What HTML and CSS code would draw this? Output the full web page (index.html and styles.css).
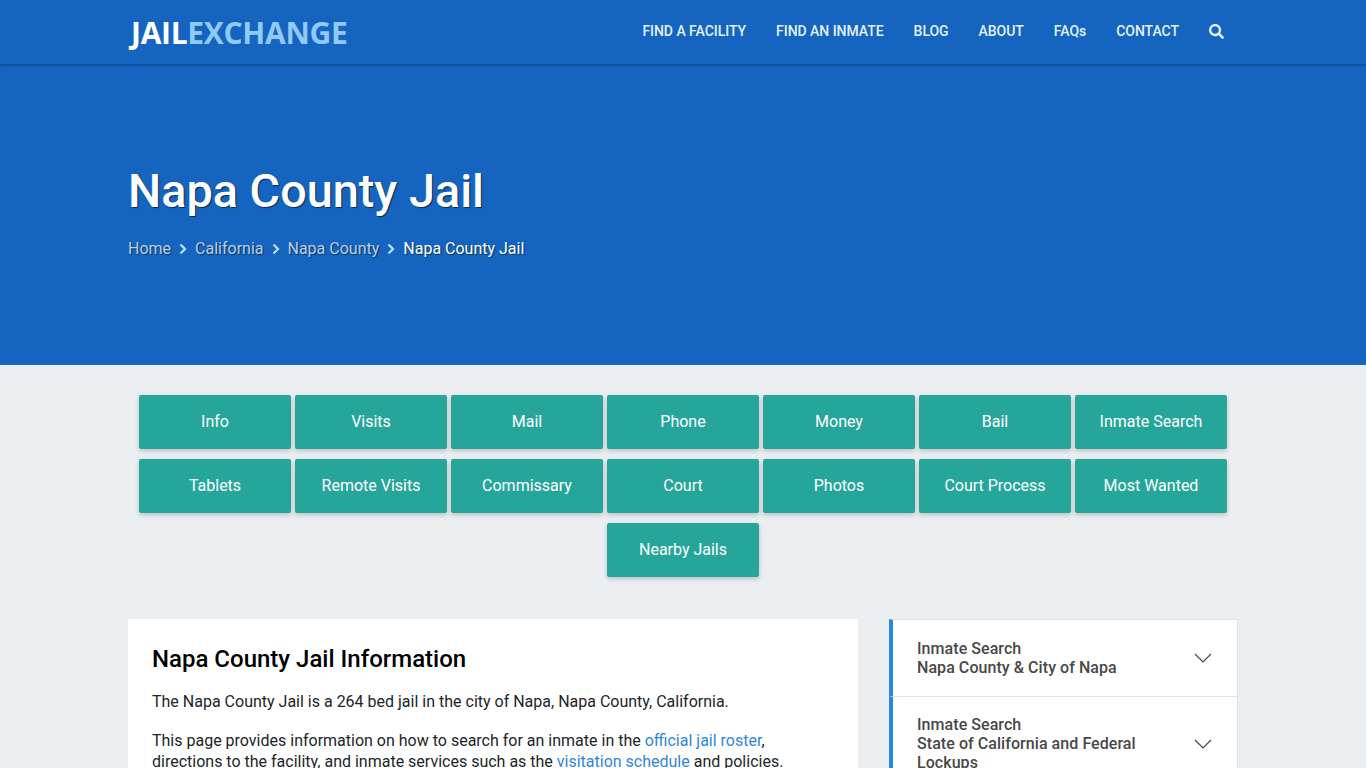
FILE: index.html
```html
<!DOCTYPE html>
<html lang="en">
<head>
    <meta charset="UTF-8">
    <meta name="viewport" content="width=device-width, initial-scale=1.0">
    <title>Napa County Jail</title>
    <link rel="stylesheet" href="styles.css">
</head>
<body>
    <header class="topbar">
        <div class="wrap topbar-inner">
            <a class="logo" href="#">JAIL<span>EXCHANGE</span></a>
            <nav class="main-nav">
                <a href="#">FIND A FACILITY</a>
                <a href="#">FIND AN INMATE</a>
                <a href="#">BLOG</a>
                <a href="#">ABOUT</a>
                <a href="#">FAQs</a>
                <a href="#">CONTACT</a>
                <a href="#" class="search-link" aria-label="Search">
                    <svg viewBox="0 0 512 512" width="15" height="15"><path fill="currentColor" d="M505 442.700L405.300 343c-4.500-4.500-10.600-7-17-7H372c27.600-35.300 44-79.700 44-128C416 93.100 322.900 0 208 0S0 93.100 0 208s93.100 208 208 208c48.300 0 92.700-16.400 128-44v16.300c0 6.400 2.500 12.500 7 17l99.700 99.700c9.400 9.400 24.600 9.400 33.900 0l28.300-28.300c9.400-9.400 9.400-24.600.1-34zM208 336c-70.700 0-128-57.200-128-128 0-70.700 57.200-128 128-128 70.700 0 128 57.200 128 128 0 70.700-57.200 128-128 128z"/></svg>
                </a>
            </nav>
        </div>
    </header>

    <section class="hero">
        <div class="wrap">
            <h1>Napa County Jail</h1>
            <div class="breadcrumb">
                <a href="#">Home</a>
                <svg class="crumb-sep" viewBox="0 0 8 12" width="8" height="12"><path d="M1.500 1.500L6 6l-4.500 4.500" fill="none" stroke="currentColor" stroke-width="2.200"/></svg>
                <a href="#">California</a>
                <svg class="crumb-sep" viewBox="0 0 8 12" width="8" height="12"><path d="M1.500 1.500L6 6l-4.500 4.500" fill="none" stroke="currentColor" stroke-width="2.200"/></svg>
                <a href="#">Napa County</a>
                <svg class="crumb-sep" viewBox="0 0 8 12" width="8" height="12"><path d="M1.500 1.500L6 6l-4.500 4.500" fill="none" stroke="currentColor" stroke-width="2.200"/></svg>
                <span class="current">Napa County Jail</span>
            </div>
        </div>
    </section>

    <main class="content">
        <div class="button-grid">
            <a href="#">Info</a>
            <a href="#">Visits</a>
            <a href="#">Mail</a>
            <a href="#">Phone</a>
            <a href="#">Money</a>
            <a href="#">Bail</a>
            <a href="#">Inmate Search</a>
            <a href="#">Tablets</a>
            <a href="#">Remote Visits</a>
            <a href="#">Commissary</a>
            <a href="#">Court</a>
            <a href="#">Photos</a>
            <a href="#">Court Process</a>
            <a href="#">Most Wanted</a>
            <a href="#">Nearby Jails</a>
        </div>

        <div class="wrap columns">
            <article class="info-card">
                <h2>Napa County Jail Information</h2>
                <p>The Napa County Jail is a 264 bed jail in the city of Napa, Napa County, California.</p>
                <p>This page provides information on how to search for an inmate in the <a href="#">official jail roster</a>, directions to the facility, and inmate services such as the <a href="#">visitation schedule</a> and policies.</p>
            </article>
            <aside class="sidebar">
                <div class="accordion-item">
                    <span>Inmate Search<br>Napa County &amp; City of Napa</span>
                    <svg viewBox="0 0 18 10" width="18" height="10"><path d="M1 1l8 8 8-8" fill="none" stroke="currentColor" stroke-width="1.200"/></svg>
                </div>
                <div class="accordion-item">
                    <span>Inmate Search<br>State of California and Federal Lockups</span>
                    <svg viewBox="0 0 18 10" width="18" height="10"><path d="M1 1l8 8 8-8" fill="none" stroke="currentColor" stroke-width="1.200"/></svg>
                </div>
            </aside>
        </div>
    </main>
</body>
</html>
```
FILE: styles.css
```css
* {
    margin: 0;
    padding: 0;
    box-sizing: border-box;
}

html, body {
    height: 768px;
    overflow: hidden;
}

body {
    background: #ebeff2;
    font-family: Roboto, 'Liberation Sans', sans-serif;
    font-size: 16px;
    color: #212529;
}

a {
    text-decoration: none;
}

.wrap {
    width: 1110px;
    margin: 0 auto;
}

.topbar {
    height: 65px;
    background: #1565c0;
    border-bottom: 1px solid #0f4f9a;
    box-shadow: 0 1px 3px rgba(0, 0, 0, 0.2);
    position: relative;
}

.topbar-inner {
    height: 64px;
    display: flex;
    justify-content: space-between;
    align-items: center;
}

.logo {
    font-family: 'Open Sans', sans-serif;
    font-weight: 700;
    font-size: 30px;
    letter-spacing: -0.3px;
    color: #fff;
    margin-left: 3px;
}

.logo span {
    color: #90caf9;
}

.main-nav {
    display: flex;
    align-items: center;
    gap: 30px;
    margin-right: 14px;
    margin-top: -2px;
}

.main-nav a {
    color: #e3f2fd;
    font-size: 14px;
    font-weight: 500;
    letter-spacing: -0.04px;
}

.search-link {
    display: flex;
}

.hero {
    height: 300px;
    background: #1565c0;
    color: #fff;
    padding-top: 97px;
}

.hero h1 {
    font-size: 46.800px;
    line-height: 58px;
    font-weight: 500;
    text-shadow: 1px 1px 1px rgba(0, 0, 0, 0.6);
}

.breadcrumb {
    display: flex;
    align-items: center;
    gap: 8px;
    margin-top: 19px;
    line-height: 20px;
    text-shadow: 1px 1px 1px rgba(0, 0, 0, 0.5);
}

.breadcrumb a {
    color: #bbcfe8;
}

.crumb-sep {
    color: #bbdefb;
}

.content {
    padding-top: 30px;
}

.button-grid {
    width: 1088px;
    margin: 0 auto;
    display: flex;
    flex-wrap: wrap;
    justify-content: center;
    gap: 10px 4px;
}

.button-grid a {
    width: 152px;
    height: 54px;
    padding-bottom: 2px;
    display: flex;
    align-items: center;
    justify-content: center;
    background: #26a69a;
    color: #fff;
    border-radius: 2px;
    box-shadow: 0 2px 5px rgba(0, 0, 0, 0.2);
}

.columns {
    display: flex;
    justify-content: space-between;
    align-items: flex-start;
    margin-top: 42px;
}

.info-card {
    width: 730px;
    background: #fff;
    padding: 24px;
}

.info-card h2 {
    font-size: 24px;
    line-height: 32px;
    font-weight: 500;
    color: #000;
    margin-bottom: 16px;
}

.info-card p {
    line-height: 21px;
    margin-bottom: 18px;
}

.info-card a {
    color: #2f86d9;
}

.sidebar {
    width: 349px;
}

.accordion-item {
    display: flex;
    align-items: center;
    justify-content: space-between;
    background: #fff;
    border-right: 1px solid #dde2e8;
    border-bottom: 1px solid #dde2e8;
    border-left: 4px solid #2b87da;
    padding: 18px 25px 19px 24px;
    color: #484848;
    font-weight: 500;
    line-height: 19px;
    letter-spacing: 0.06px;
}

.accordion-item:first-child {
    border-top: 1px solid #dde2e8;
    padding-top: 19px;
}

.accordion-item span {
    width: 235px;
}

.accordion-item svg {
    flex-shrink: 0;
}
```
